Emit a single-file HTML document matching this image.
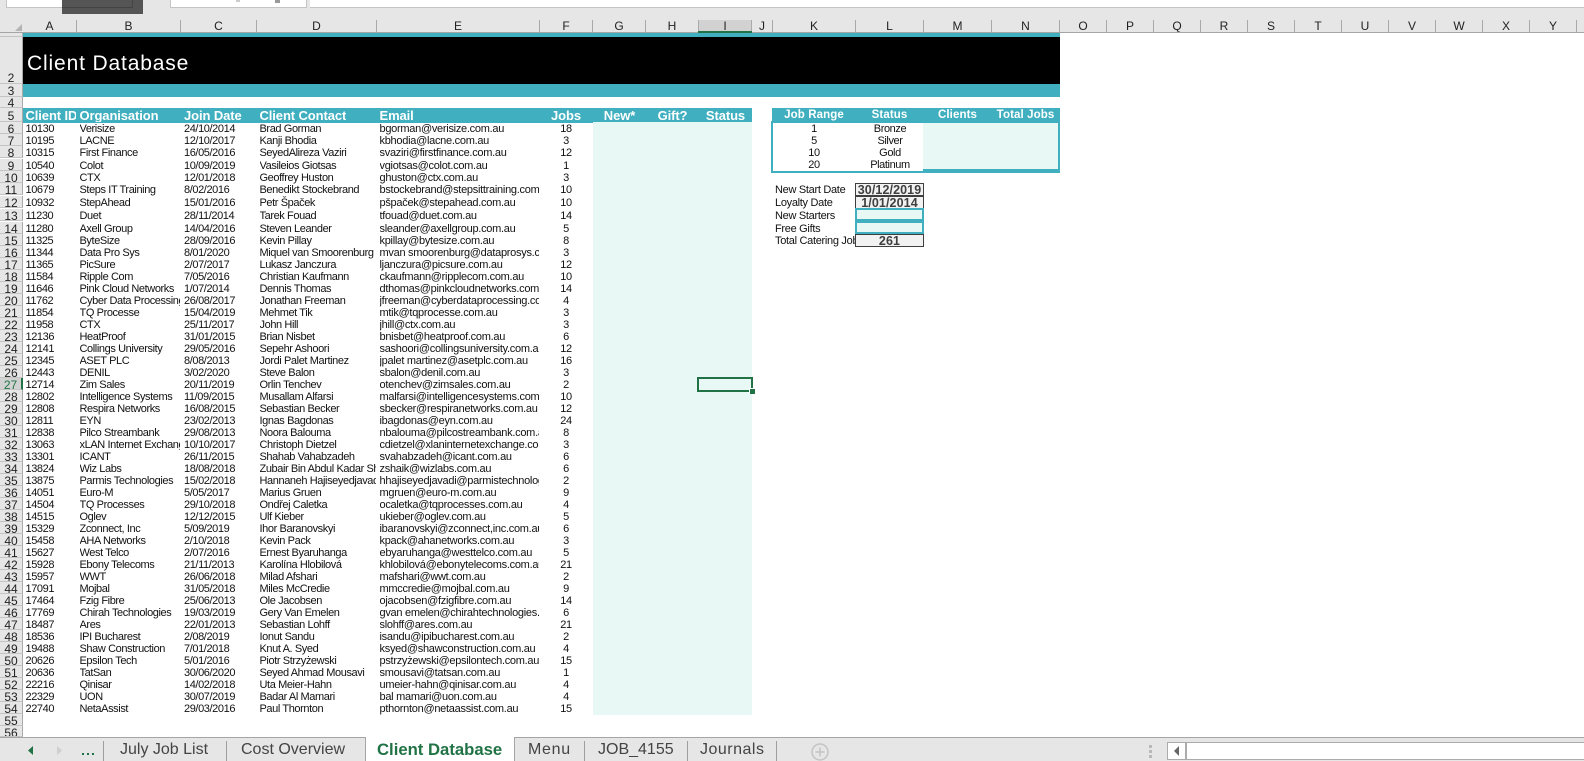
<!DOCTYPE html>
<html><head><meta charset="utf-8"><style>
html,body{margin:0;padding:0;background:#fff}
#p{position:relative;width:1584px;height:761px;overflow:hidden;background:#fff;font-family:"Liberation Sans","DejaVu Sans",sans-serif;color:#111}
#p div{position:absolute}
.ch{top:20px;height:12px;line-height:13px;font-size:12px;text-align:center;color:#222;border-right:1px solid #a9a9a9;box-sizing:border-box}
.r{left:0;width:760px;height:12px}
.r span{position:absolute;top:0;height:14px;line-height:14px;font-size:11px;letter-spacing:-.4px;white-space:nowrap;overflow:hidden}
.r span:nth-child(1){left:0;width:22px;background:#e6e6e6;border-bottom:1px solid #c4c4c4;border-right:1px solid #a9a9a9;box-sizing:content-box;height:11px;text-align:center;font-size:12px;letter-spacing:0;color:#222}
.r span:nth-child(2){left:25.5px;width:50px}
.r span:nth-child(3){left:79.5px;width:100px}
.r span:nth-child(4){left:184px;width:72px}
.r span:nth-child(5){left:259.5px;width:116px}
.r span:nth-child(6){left:379.5px;width:159px;letter-spacing:-.28px}
.r span:nth-child(7){left:539px;width:54px;text-align:center}
.rh{left:0;width:22px;background:#e6e6e6;border-right:1px solid #a9a9a9;border-bottom:1px solid #c4c4c4;text-align:center;font-size:12px;color:#222;overflow:hidden}
.h{top:108px;height:14px;line-height:15px;font-size:13px;font-weight:bold;color:#fff;letter-spacing:-.1px;white-space:nowrap;overflow:hidden}
.h2{font-size:11.5px;letter-spacing:.1px}
.c{text-align:center}
.t{font-size:11px;letter-spacing:-.4px;line-height:14px;height:14px;white-space:nowrap;text-align:center}
.l{left:775px;font-size:11px;letter-spacing:-.3px;line-height:15px;height:15px;white-space:nowrap;width:80px;overflow:hidden}
.b{left:855px;width:67px;height:11px;background:#f2f2f2;border:1px solid #3f3f3f;color:#3f3f3f;font-weight:bold;font-size:12.5px;line-height:12px;text-align:center;letter-spacing:.1px}
.m{left:855px;width:65px;height:9px;background:#e8f8f5;border:2px solid #40afbf}
.tab{top:738px;height:24px;line-height:23px;font-size:16px;color:#444;white-space:nowrap}
.sep{top:741px;width:1px;height:20px;background:#9f9f9f}
</style></head><body><div id="p">

<div style="left:0;top:0;width:1584px;height:32px;background:#e6e6e6"></div>
<div style="left:6px;top:0;width:56px;height:7px;background:#fff;border:1px solid #c4c4c4;border-top:0;box-sizing:content-box"></div>
<div style="left:62px;top:0;width:81px;height:14px;background:#555"></div>
<div style="left:62px;top:0;width:70px;height:7px;border:1px solid #444;border-top:0;border-left:0"></div>
<div style="left:170px;top:0;width:135px;height:7px;background:#fff;border:1px solid #c4c4c4;border-top:0"></div>
<div style="left:310px;top:0;width:1274px;height:7px;background:#fff;border-bottom:1px solid #c4c4c4"></div>
<div style="left:236px;top:0;width:4px;height:2px;background:#ccc"></div>
<div style="left:275px;top:0;width:5px;height:3px;background:#999"></div>
<div style="left:15px;top:24px;width:0;height:0;border-left:7px solid transparent;border-bottom:7px solid #b4b4b4"></div>

<div class="ch" style="left:23px;width:54px">A</div>
<div class="ch" style="left:77px;width:104px">B</div>
<div class="ch" style="left:181px;width:76px">C</div>
<div class="ch" style="left:257px;width:120px">D</div>
<div class="ch" style="left:377px;width:163px">E</div>
<div class="ch" style="left:540px;width:53px">F</div>
<div class="ch" style="left:593px;width:53px">G</div>
<div class="ch" style="left:646px;width:53px">H</div>
<div class="ch" style="left:699px;width:53px;background:#d2d2d2">I</div>
<div class="ch" style="left:752px;width:21px">J</div>
<div class="ch" style="left:773px;width:83px">K</div>
<div class="ch" style="left:856px;width:68px">L</div>
<div class="ch" style="left:924px;width:68px">M</div>
<div class="ch" style="left:992px;width:68px">N</div>
<div class="ch" style="left:1060px;width:47px">O</div>
<div class="ch" style="left:1107px;width:47px">P</div>
<div class="ch" style="left:1154px;width:47px">Q</div>
<div class="ch" style="left:1201px;width:47px">R</div>
<div class="ch" style="left:1248px;width:47px">S</div>
<div class="ch" style="left:1295px;width:47px">T</div>
<div class="ch" style="left:1342px;width:47px">U</div>
<div class="ch" style="left:1389px;width:47px">V</div>
<div class="ch" style="left:1436px;width:47px">W</div>
<div class="ch" style="left:1483px;width:47px">X</div>
<div class="ch" style="left:1530px;width:47px">Y</div>
<div style="left:0;top:32px;width:1584px;height:1px;background:#a5a5a5"></div>
<div style="left:698px;top:31px;width:54px;height:2px;background:#217346"></div>

<div class="rh" style="top:33px;height:3px"></div>
<div class="rh" style="top:37px;height:46px;line-height:82px">2</div>
<div class="rh" style="top:84px;height:12px;line-height:15px">3</div>
<div class="rh" style="top:97px;height:10px;line-height:13px">4</div>
<div class="rh" style="top:108px;height:13px;line-height:17px">5</div>

<div style="left:23px;top:33px;width:1037px;height:4px;background:#40afbf"></div>
<div style="left:23px;top:37px;width:1037px;height:47px;background:#000"></div>
<div style="left:27px;top:51px;height:26px;line-height:26px;font-size:21px;letter-spacing:.85px;color:#fff;white-space:nowrap">Client Database</div>
<div style="left:23px;top:84px;width:1037px;height:13px;background:#40afbf"></div>

<div style="left:23px;top:108px;width:729px;height:15px;background:#40afbf"></div>
<div style="left:593px;top:122px;width:159px;height:593px;background:#e8f8f5"></div>
<div class="h" style="left:25.5px;width:50px">Client ID</div>
<div class="h" style="left:79.5px">Organisation</div>
<div class="h" style="left:184px">Join Date</div>
<div class="h" style="left:259.5px">Client Contact</div>
<div class="h" style="left:379.5px">Email</div>
<div class="h c" style="left:539px;width:54px">Jobs</div>
<div class="h c" style="left:593px;width:53px">New*</div>
<div class="h c" style="left:646px;width:53px">Gift?</div>
<div class="h c" style="left:699px;width:53px">Status</div>

<div class="r" style="top:122px"><span>6</span><span>10130</span><span>Verisize</span><span>24/10/2014</span><span>Brad Gorman</span><span>bgorman@verisize.com.au</span><span>18</span></div>
<div class="r" style="top:134px"><span>7</span><span>10195</span><span>LACNE</span><span>12/10/2017</span><span>Kanji Bhodia</span><span>kbhodia@lacne.com.au</span><span>3</span></div>
<div class="r" style="top:146px"><span>8</span><span>10315</span><span>First Finance</span><span>16/05/2016</span><span>SeyedAlireza Vaziri</span><span>svaziri@firstfinance.com.au</span><span>12</span></div>
<div class="r" style="top:159px"><span>9</span><span>10540</span><span>Colot</span><span>10/09/2019</span><span>Vasileios Giotsas</span><span>vgiotsas@colot.com.au</span><span>1</span></div>
<div class="r" style="top:171px"><span>10</span><span>10639</span><span>CTX</span><span>12/01/2018</span><span>Geoffrey Huston</span><span>ghuston@ctx.com.au</span><span>3</span></div>
<div class="r" style="top:183px"><span>11</span><span>10679</span><span>Steps IT Training</span><span>8/02/2016</span><span>Benedikt Stockebrand</span><span>bstockebrand@stepsittraining.com.au</span><span>10</span></div>
<div class="r" style="top:196px"><span>12</span><span>10932</span><span>StepAhead</span><span>15/01/2016</span><span>Petr Špaček</span><span>pšpaček@stepahead.com.au</span><span>10</span></div>
<div class="r" style="top:209px"><span>13</span><span>11230</span><span>Duet</span><span>28/11/2014</span><span>Tarek Fouad</span><span>tfouad@duet.com.au</span><span>14</span></div>
<div class="r" style="top:222px"><span>14</span><span>11280</span><span>Axell Group</span><span>14/04/2016</span><span>Steven Leander</span><span>sleander@axellgroup.com.au</span><span>5</span></div>
<div class="r" style="top:234px"><span>15</span><span>11325</span><span>ByteSize</span><span>28/09/2016</span><span>Kevin Pillay</span><span>kpillay@bytesize.com.au</span><span>8</span></div>
<div class="r" style="top:246px"><span>16</span><span>11344</span><span>Data Pro Sys</span><span>8/01/2020</span><span>Miquel van Smoorenburg</span><span>mvan smoorenburg@dataprosys.com.au</span><span>3</span></div>
<div class="r" style="top:258px"><span>17</span><span>11365</span><span>PicSure</span><span>2/07/2017</span><span>Lukasz Janczura</span><span>ljanczura@picsure.com.au</span><span>12</span></div>
<div class="r" style="top:270px"><span>18</span><span>11584</span><span>Ripple Com</span><span>7/05/2016</span><span>Christian Kaufmann</span><span>ckaufmann@ripplecom.com.au</span><span>10</span></div>
<div class="r" style="top:282px"><span>19</span><span>11646</span><span>Pink Cloud Networks</span><span>1/07/2014</span><span>Dennis Thomas</span><span>dthomas@pinkcloudnetworks.com.au</span><span>14</span></div>
<div class="r" style="top:294px"><span>20</span><span>11762</span><span>Cyber Data Processing</span><span>26/08/2017</span><span>Jonathan Freeman</span><span>jfreeman@cyberdataprocessing.com.au</span><span>4</span></div>
<div class="r" style="top:306px"><span>21</span><span>11854</span><span>TQ Processe</span><span>15/04/2019</span><span>Mehmet Tik</span><span>mtik@tqprocesse.com.au</span><span>3</span></div>
<div class="r" style="top:318px"><span>22</span><span>11958</span><span>CTX</span><span>25/11/2017</span><span>John Hill</span><span>jhill@ctx.com.au</span><span>3</span></div>
<div class="r" style="top:330px"><span>23</span><span>12136</span><span>HeatProof</span><span>31/01/2015</span><span>Brian Nisbet</span><span>bnisbet@heatproof.com.au</span><span>6</span></div>
<div class="r" style="top:342px"><span>24</span><span>12141</span><span>Collings University</span><span>29/05/2016</span><span>Sepehr Ashoori</span><span>sashoori@collingsuniversity.com.au</span><span>12</span></div>
<div class="r" style="top:354px"><span>25</span><span>12345</span><span>ASET PLC</span><span>8/08/2013</span><span>Jordi Palet Martinez</span><span>jpalet martinez@asetplc.com.au</span><span>16</span></div>
<div class="r" style="top:366px"><span>26</span><span>12443</span><span>DENIL</span><span>3/02/2020</span><span>Steve Balon</span><span>sbalon@denil.com.au</span><span>3</span></div>
<div class="r" style="top:378px"><span style="background:#d2d2d2;color:#217346;border-right:2px solid #217346;width:21px">27</span><span>12714</span><span>Zim Sales</span><span>20/11/2019</span><span>Orlin Tenchev</span><span>otenchev@zimsales.com.au</span><span>2</span></div>
<div class="r" style="top:390px"><span>28</span><span>12802</span><span>Intelligence Systems</span><span>11/09/2015</span><span>Musallam Alfarsi</span><span>malfarsi@intelligencesystems.com.au</span><span>10</span></div>
<div class="r" style="top:402px"><span>29</span><span>12808</span><span>Respira Networks</span><span>16/08/2015</span><span>Sebastian Becker</span><span>sbecker@respiranetworks.com.au</span><span>12</span></div>
<div class="r" style="top:414px"><span>30</span><span>12811</span><span>EYN</span><span>23/02/2013</span><span>Ignas Bagdonas</span><span>ibagdonas@eyn.com.au</span><span>24</span></div>
<div class="r" style="top:426px"><span>31</span><span>12838</span><span>Pilco Streambank</span><span>29/08/2013</span><span>Noora Balouma</span><span>nbalouma@pilcostreambank.com.au</span><span>8</span></div>
<div class="r" style="top:438px"><span>32</span><span>13063</span><span>xLAN Internet Exchange</span><span>10/10/2017</span><span>Christoph Dietzel</span><span>cdietzel@xlaninternetexchange.com.au</span><span>3</span></div>
<div class="r" style="top:450px"><span>33</span><span>13301</span><span>ICANT</span><span>26/11/2015</span><span>Shahab Vahabzadeh</span><span>svahabzadeh@icant.com.au</span><span>6</span></div>
<div class="r" style="top:462px"><span>34</span><span>13824</span><span>Wiz Labs</span><span>18/08/2018</span><span>Zubair Bin Abdul Kadar Shaikh</span><span>zshaik@wizlabs.com.au</span><span>6</span></div>
<div class="r" style="top:474px"><span>35</span><span>13875</span><span>Parmis Technologies</span><span>15/02/2018</span><span>Hannaneh Hajiseyedjavadi</span><span>hhajiseyedjavadi@parmistechnologies.com.au</span><span>2</span></div>
<div class="r" style="top:486px"><span>36</span><span>14051</span><span>Euro-M</span><span>5/05/2017</span><span>Marius Gruen</span><span>mgruen@euro-m.com.au</span><span>9</span></div>
<div class="r" style="top:498px"><span>37</span><span>14504</span><span>TQ Processes</span><span>29/10/2018</span><span>Ondřej Caletka</span><span>ocaletka@tqprocesses.com.au</span><span>4</span></div>
<div class="r" style="top:510px"><span>38</span><span>14515</span><span>Oglev</span><span>12/12/2015</span><span>Ulf Kieber</span><span>ukieber@oglev.com.au</span><span>5</span></div>
<div class="r" style="top:522px"><span>39</span><span>15329</span><span>Zconnect, Inc</span><span>5/09/2019</span><span>Ihor Baranovskyi</span><span>ibaranovskyi@zconnect,inc.com.au</span><span>6</span></div>
<div class="r" style="top:534px"><span>40</span><span>15458</span><span>AHA Networks</span><span>2/10/2018</span><span>Kevin Pack</span><span>kpack@ahanetworks.com.au</span><span>3</span></div>
<div class="r" style="top:546px"><span>41</span><span>15627</span><span>West Telco</span><span>2/07/2016</span><span>Ernest Byaruhanga</span><span>ebyaruhanga@westtelco.com.au</span><span>5</span></div>
<div class="r" style="top:558px"><span>42</span><span>15928</span><span>Ebony Telecoms</span><span>21/11/2013</span><span>Karolína Hlobilová</span><span>khlobilová@ebonytelecoms.com.au</span><span>21</span></div>
<div class="r" style="top:570px"><span>43</span><span>15957</span><span>WWT</span><span>26/06/2018</span><span>Milad Afshari</span><span>mafshari@wwt.com.au</span><span>2</span></div>
<div class="r" style="top:582px"><span>44</span><span>17091</span><span>Mojbal</span><span>31/05/2018</span><span>Miles McCredie</span><span>mmccredie@mojbal.com.au</span><span>9</span></div>
<div class="r" style="top:594px"><span>45</span><span>17464</span><span>Fzig Fibre</span><span>25/06/2013</span><span>Ole Jacobsen</span><span>ojacobsen@fzigfibre.com.au</span><span>14</span></div>
<div class="r" style="top:606px"><span>46</span><span>17769</span><span>Chirah Technologies</span><span>19/03/2019</span><span>Gery Van Emelen</span><span>gvan emelen@chirahtechnologies.com.au</span><span>6</span></div>
<div class="r" style="top:618px"><span>47</span><span>18487</span><span>Ares</span><span>22/01/2013</span><span>Sebastian Lohff</span><span>slohff@ares.com.au</span><span>21</span></div>
<div class="r" style="top:630px"><span>48</span><span>18536</span><span>IPI Bucharest</span><span>2/08/2019</span><span>Ionut Sandu</span><span>isandu@ipibucharest.com.au</span><span>2</span></div>
<div class="r" style="top:642px"><span>49</span><span>19488</span><span>Shaw Construction</span><span>7/01/2018</span><span>Knut A. Syed</span><span>ksyed@shawconstruction.com.au</span><span>4</span></div>
<div class="r" style="top:654px"><span>50</span><span>20626</span><span>Epsilon Tech</span><span>5/01/2016</span><span>Piotr Strzyżewski</span><span>pstrzyżewski@epsilontech.com.au</span><span>15</span></div>
<div class="r" style="top:666px"><span>51</span><span>20636</span><span>TatSan</span><span>30/06/2020</span><span>Seyed Ahmad Mousavi</span><span>smousavi@tatsan.com.au</span><span>1</span></div>
<div class="r" style="top:678px"><span>52</span><span>22216</span><span>Qinisar</span><span>14/02/2018</span><span>Uta Meier-Hahn</span><span>umeier-hahn@qinisar.com.au</span><span>4</span></div>
<div class="r" style="top:690px"><span>53</span><span>22329</span><span>UON</span><span>30/07/2019</span><span>Badar Al Mamari</span><span>bal mamari@uon.com.au</span><span>4</span></div>
<div class="r" style="top:702px"><span>54</span><span>22740</span><span>NetaAssist</span><span>29/03/2016</span><span>Paul Thornton</span><span>pthornton@netaassist.com.au</span><span>15</span></div>
<div class="rh" style="top:714px;height:11px;line-height:14px">55</div>
<div class="rh" style="top:726px;height:10px;line-height:14px">56</div>

<div style="left:697px;top:377px;width:52px;height:11px;border:2px solid #217346"></div>
<div style="left:749px;top:388px;width:5px;height:5px;background:#217346;border-left:1px solid #fff;border-top:1px solid #fff"></div>

<div style="left:772px;top:108px;width:288px;height:14px;background:#40afbf"></div>
<div class="h c h2" style="left:772px;width:84px">Job Range</div>
<div class="h c h2" style="left:856px;width:67px">Status</div>
<div class="h c h2" style="left:924px;width:67px">Clients</div>
<div class="h c h2" style="left:991px;width:69px">Total Jobs</div>
<div style="left:771px;top:121px;width:285px;height:48px;border:2px solid #40afbf;background:#fff"></div>
<div style="left:923px;top:123px;width:135px;height:48px;background:#e8f8f5"></div>
<div style="left:923px;top:169px;width:137px;height:2px;background:#40afbf"></div>
<div style="left:1058px;top:121px;width:2px;height:50px;background:#40afbf"></div>
<div class="t" style="left:772px;top:122px;width:84px">1</div>
<div class="t" style="left:856px;top:122px;width:68px">Bronze</div>
<div class="t" style="left:772px;top:134px;width:84px">5</div>
<div class="t" style="left:856px;top:134px;width:68px">Silver</div>
<div class="t" style="left:772px;top:146px;width:84px">10</div>
<div class="t" style="left:856px;top:146px;width:68px">Gold</div>
<div class="t" style="left:772px;top:158px;width:84px">20</div>
<div class="t" style="left:856px;top:158px;width:68px">Platinum</div>

<div class="l" style="top:183px">New Start Date</div>
<div class="l" style="top:196px">Loyalty Date</div>
<div class="l" style="top:209px">New Starters</div>
<div class="l" style="top:222px">Free Gifts</div>
<div class="l" style="top:234px">Total Catering Jobs</div>
<div class="b" style="top:183px">30/12/2019</div>
<div class="b" style="top:196px">1/01/2014</div>
<div class="b" style="top:234px">261</div>
<div class="m" style="top:208px"></div>
<div class="m" style="top:221px"></div>

<div style="left:0;top:737px;width:1584px;height:24px;background:#e6e6e6;border-top:1px solid #a5a5a5;box-sizing:border-box"></div>
<svg style="position:absolute;left:0;top:737px" width="120" height="24"><path d="M33 9v9l-5-4.500z" fill="#217346"/><path d="M57 9v9l5-4.500z" fill="#cfcfcf"/><rect x="82" y="16" width="2" height="2" fill="#217346"/><rect x="87" y="16" width="2" height="2" fill="#217346"/><rect x="92" y="16" width="2" height="2" fill="#217346"/></svg>
<div class="sep" style="left:103px"></div>
<div class="tab" style="left:120px">July Job List</div>
<div class="sep" style="left:226px"></div>
<div class="tab" style="left:241px">Cost Overview</div>
<div style="left:365px;top:737px;width:150px;height:24px;background:#fff;border-left:1px solid #a5a5a5;border-right:1px solid #a5a5a5;box-sizing:border-box"></div>
<div class="tab" style="left:377px;font-weight:bold;font-size:16.7px;color:#217346">Client Database</div>
<div class="tab" style="left:528px;letter-spacing:.7px">Menu</div>
<div class="sep" style="left:584px"></div>
<div class="tab" style="left:598px">JOB_4155</div>
<div class="sep" style="left:687px"></div>
<div class="tab" style="left:700px;letter-spacing:.5px">Journals</div>
<div class="sep" style="left:776px"></div>
<svg style="position:absolute;left:810px;top:742px" width="20" height="20"><circle cx="10" cy="10" r="8" fill="none" stroke="#c4c4c4" stroke-width="1.500"/><path d="M10 5.500v9M5.500 10h9" stroke="#c4c4c4" stroke-width="1.500"/></svg>
<div style="left:1149px;top:745px;width:3px;height:3px;background:#b9b9b9"></div>
<div style="left:1149px;top:750px;width:3px;height:3px;background:#b9b9b9"></div>
<div style="left:1149px;top:755px;width:3px;height:3px;background:#b9b9b9"></div>
<div style="left:1167px;top:742px;width:417px;height:18px;background:#fff;border:1px solid #ababab;border-right:0;box-sizing:border-box"></div>
<div style="left:1185px;top:743px;width:2px;height:17px;background:#ababab"></div>
<svg style="position:absolute;left:1170px;top:744px" width="14" height="14"><path d="M9 2v10l-5-5z" fill="#666"/></svg>
</div></body></html>
